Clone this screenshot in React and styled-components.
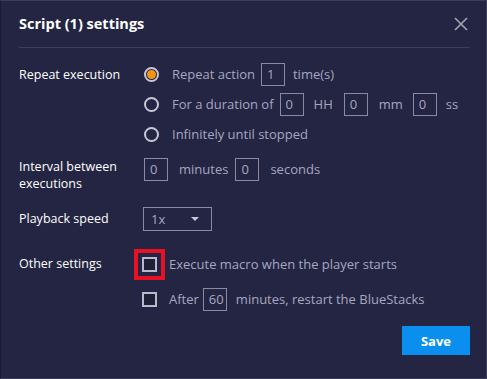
import React, {useState} from 'react';
import styled, {createGlobalStyle} from 'styled-components';

const GlobalStyle = createGlobalStyle`
  html, body {
    margin: 0;
    padding: 0;
    background: #232542;
  }
  * {
    box-sizing: border-box;
  }
`

const Dialog = styled.div`
  width: 487px;
  height: 379px;
  background: #232542;
  border: 1px solid #3a3c5a;
  border-left-color: #1b1c33;
  padding: 0 16px 0 18px;
  font-family: "Open Sans", "Noto Sans", sans-serif;
  font-size: 13px;
  color: #ffffff;
  display: flex;
  flex-direction: column;
`
const Header = styled.div`
  height: 47px;
  display: flex;
  align-items: center;
  justify-content: space-between;
  border-bottom: 1px solid #3c3e5c;
  padding-bottom: 1px;
`
const Title = styled.h1`
  margin: 0;
  font-size: 14.5px;
  font-weight: 700;
  color: #ffffff;
`
const CloseButton = styled.button`
  background: none;
  border: none;
  padding: 0;
  width: 16px;
  height: 16px;
  display: flex;
  align-items: center;
  justify-content: center;
  margin-right: 1px;
  cursor: pointer;
`
const Body = styled.div`
  flex: 1;
  display: flex;
  flex-direction: column;
  padding-top: 11px;
`
const Section = styled.div`
  display: grid;
  grid-template-columns: 124px 1fr;
  margin-top: ${p => p.$top || 0}px;
`
const Label = styled.div`
  color: #ffffff;
  font-size: 12.5px;
  line-height: 17px;
  padding-top: ${p => p.$pad || 0}px;
`
const Options = styled.div`
  display: flex;
  flex-direction: column;
`
const Row = styled.div`
  display: flex;
  align-items: center;
  height: ${p => p.$h || 30}px;
  color: #a7a7c0;
`
const RadioMark = styled.span`
  width: 15px;
  height: 15px;
  border-radius: 50%;
  border: 2px solid #c6c6d4;
  margin: 0 13px 0 1px;
  display: flex;
  align-items: center;
  justify-content: center;
  flex-shrink: 0;
  &::after {
    content: '';
    width: 9px;
    height: 9px;
    border-radius: 50%;
    background: ${p => p.$on ? '#f7940f' : 'transparent'};
  }
`
const Box = styled.span`
  display: inline-flex;
  align-items: center;
  width: ${p => p.$w || 24}px;
  height: 23px;
  border: 1px solid #8a8aa4;
  padding-left: 5px;
  margin: 0 ${p => p.$r || 8}px 0 ${p => p.$l || 4}px;
  color: #a7a7c0;
`
const Select = styled.div`
  width: 69px;
  height: 24px;
  border: 1px solid #8a8aa4;
  display: flex;
  align-items: center;
  justify-content: space-between;
  padding: 0 12px 0 7px;
  color: #a7a7c0;
`
const Caret = styled.span`
  width: 0;
  height: 0;
  border-left: 4px solid transparent;
  border-right: 4px solid transparent;
  border-top: 4px solid #c6c6d4;
`
const Check = styled.span`
  width: 15px;
  height: 15px;
  border: 2px solid #b9b9ca;
  background: #1e2038;
  flex-shrink: 0;
  margin: 0 12px 0 -1px;
`
const Highlight = styled.span`
  display: flex;
  border: 4px solid #e81123;
  padding: 4px;
  margin: -8px 4px -8px -9px;
  & > span {
    margin: 0;
  }
`
const Footer = styled.div`
  display: flex;
  justify-content: flex-end;
  margin-top: 7px;
`
const SaveButton = styled.button`
  width: 68px;
  height: 29px;
  border: none;
  background: #0a8fee;
  color: #ffffff;
  font-family: inherit;
  font-size: 13px;
  font-weight: 700;
  cursor: pointer;
`

const Radio = ({on, children}) => (
  <Row>
    <RadioMark $on={on}/>
    {children}
  </Row>
)

const App = () => {
  const [mode] = useState(0)
  return (
    <React.Fragment>
      <GlobalStyle/>
      <Dialog>
        <Header>
          <Title>Script (1) settings</Title>
          <CloseButton aria-label="close">
            <svg width="14" height="14" viewBox="0 0 14 14">
              <path d="M1 1 L13 13 M13 1 L1 13" stroke="#a4a4b4" strokeWidth="1.6"/>
            </svg>
          </CloseButton>
        </Header>
        <Body>
          <Section>
            <Label $pad={7}>Repeat execution</Label>
            <Options>
              <Radio on={mode === 0}>Repeat action<Box $l={6}>1</Box>time(s)</Radio>
              <Radio on={mode === 1}>
                For a duration of<Box $l={6} $r={10}>0</Box>HH<Box $l={11} $r={11}>0</Box>mm<Box $l={10} $r={9}>0</Box>ss
              </Radio>
              <Radio on={mode === 2}>Infinitely until stopped</Radio>
            </Options>
          </Section>
          <Section $top={8}>
            <Label $pad={1}>Interval between<br/>executions</Label>
            <Row $h={24}>
              <Box $l={1} $r={11}>0</Box>minutes<Box $l={7} $r={11}>0</Box>seconds
            </Row>
          </Section>
          <Section $top={15}>
            <Label $pad={3}>Playback speed</Label>
            <Select>1x<Caret/></Select>
          </Section>
          <Section $top={18}>
            <Label $pad={6}>Other settings</Label>
            <Options>
              <Row>
                <Highlight><Check/></Highlight>
                Execute macro when the player starts
              </Row>
              <Row $h={40}>
                <Check/>After<Box $l={4} $r={9}>60</Box>minutes, restart the BlueStacks
              </Row>
            </Options>
          </Section>
          <Footer>
            <SaveButton>Save</SaveButton>
          </Footer>
        </Body>
      </Dialog>
    </React.Fragment>
  )
}

export default App
